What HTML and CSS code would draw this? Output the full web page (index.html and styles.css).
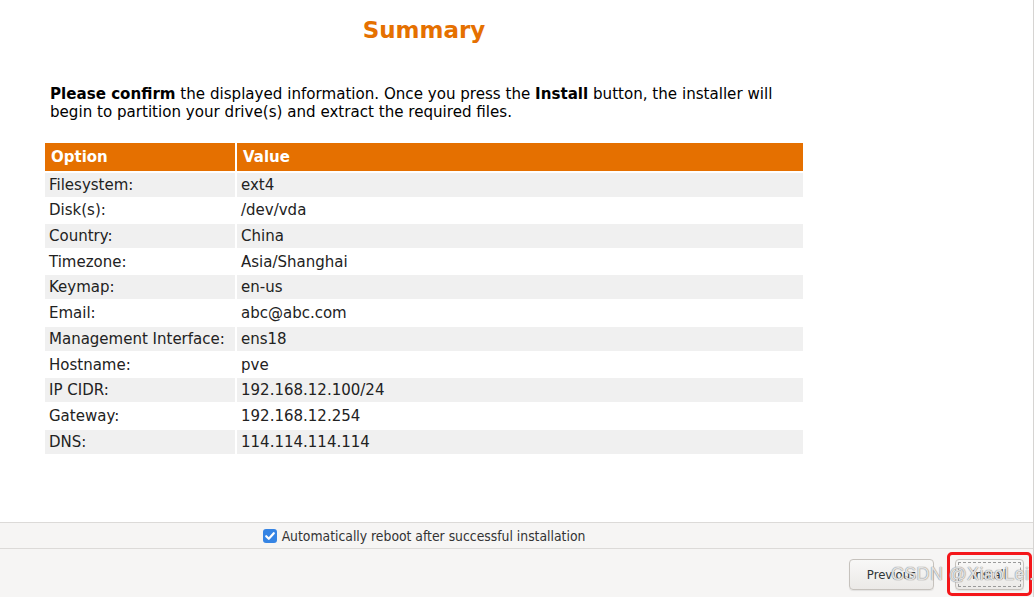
FILE: index.html
```html
<!DOCTYPE html>
<html lang="en">
<head>
    <meta charset="UTF-8">
    <title>Summary</title>
    <link rel="stylesheet" href="styles.css">
</head>
<body>
    <div class="window">
        <div class="content">
            <h1 class="title">Summary</h1>
            <p class="intro"><b>Please confirm</b> the displayed information. Once you press the <b>Install</b> button, the installer will begin to partition your drive(s) and extract the required files.</p>

            <div class="summary">
                <div class="head">Option</div>
                <div class="head">Value</div>

                <div class="cell odd">Filesystem:</div><div class="cell odd">ext4</div>
                <div class="cell">Disk(s):</div><div class="cell">/dev/vda</div>
                <div class="cell odd">Country:</div><div class="cell odd">China</div>
                <div class="cell">Timezone:</div><div class="cell">Asia/Shanghai</div>
                <div class="cell odd">Keymap:</div><div class="cell odd">en-us</div>
                <div class="cell">Email:</div><div class="cell">abc@abc.com</div>
                <div class="cell odd">Management Interface:</div><div class="cell odd">ens18</div>
                <div class="cell">Hostname:</div><div class="cell">pve</div>
                <div class="cell odd">IP CIDR:</div><div class="cell odd">192.168.12.100/24</div>
                <div class="cell">Gateway:</div><div class="cell">192.168.12.254</div>
                <div class="cell odd">DNS:</div><div class="cell odd">114.114.114.114</div>
            </div>
        </div>

        <div class="reboot-bar">
            <label class="reboot">
                <span class="check">
                    <svg width="14" height="14" viewBox="0 0 14 14"><path d="M3.2 7.2 L5.8 9.8 L10.8 4.2" fill="none" stroke="#fff" stroke-width="2.2" stroke-linecap="round" stroke-linejoin="round"/></svg>
                </span>
                Automatically reboot after successful installation
            </label>
        </div>

        <div class="button-bar">
            <button class="btn btn-prev">Previous</button>
            <button class="btn btn-focus">Install
                <span class="highlight"></span>
            </button>
            <span class="watermark">CSDN @XiaoLei.</span>
        </div>
    </div>
</body>
</html>
```

FILE: styles.css
```css
body {
    margin: 0;
    background-color: #fff;
    font-family: "DejaVu Sans", Verdana, sans-serif;
    color: #1a1a1a;
}

.window {
    width: 1033px;
    height: 597px;
    border-right: 1px solid #d6d4d2;
    display: flex;
    flex-direction: column;
    overflow: hidden;
}

.content {
    flex: 1;
    width: 848px;
    padding: 0 45px;
    box-sizing: border-box;
}

.title {
    margin: 0;
    padding-top: 16px;
    line-height: 28px;
    font-size: 23px;
    font-weight: bold;
    text-align: center;
    color: #e57000;
}

.intro {
    margin: 41px 0 0 0;
    padding: 0 5px;
    font-size: 15.1px;
    line-height: 18px;
    color: #000;
}

.summary {
    display: grid;
    grid-template-columns: 190px 1fr;
    grid-template-rows: 28px;
    grid-auto-rows: 24px;
    column-gap: 2px;
    row-gap: 1.7px;
    margin-top: 22px;
}

.head {
    line-height: 28px;
    padding: 0 6px;
    background-color: #e57000;
    color: #fff;
    font-weight: bold;
    font-size: 15px;
}

.cell {
    line-height: 24px;
    padding: 0 4px;
    font-size: 15px;
    color: #222;
}

.cell.odd {
    background-color: #f0f0f0;
}

.reboot-bar {
    box-sizing: border-box;
    height: 27px;
    flex-shrink: 0;
    border-top: 1px solid #dcdad8;
    border-bottom: 1px solid #dcdad8;
    background-color: #f6f5f4;
    display: flex;
    justify-content: center;
    padding-right: 185px;
}

.reboot {
    display: flex;
    align-items: center;
    gap: 5px;
    font-family: "DejaVu Sans Condensed", "DejaVu Sans", sans-serif;
    font-size: 13.8px;
    color: #333;
}

.check {
    width: 14px;
    height: 14px;
    border-radius: 3px;
    background-color: #3584e4;
    display: flex;
}

.button-bar {
    box-sizing: border-box;
    height: 48px;
    flex-shrink: 0;
    background-color: #f6f5f4;
    display: flex;
    justify-content: flex-end;
    align-items: flex-start;
    gap: 21px;
    padding: 10px 9px 0 0;
    position: relative;
}

.btn {
    position: relative;
    height: 31px;
    padding: 0;
    font-family: "DejaVu Sans Condensed", "DejaVu Sans", sans-serif;
    font-size: 13px;
    color: #2e3436;
    background: linear-gradient(#f8f8f7, #ebe9e7);
    border: 1px solid #c6c2bd;
    border-radius: 4px;
    box-shadow: 0 1px 1px rgba(0, 0, 0, 0.08);
}

.btn-prev {
    width: 85px;
}

.btn-focus {
    width: 69px;
    outline: 1px dashed #9a9a9a;
    outline-offset: -4px;
}

.highlight {
    position: absolute;
    left: -9px;
    top: -8px;
    width: 79px;
    height: 38px;
    border: 3px solid #f4161a;
    border-radius: 5px;
}

.watermark {
    position: absolute;
    left: 891px;
    top: 15px;
    white-space: nowrap;
    font-family: "Liberation Sans", Arial, sans-serif;
    font-size: 18px;
    letter-spacing: 0.3px;
    color: rgba(255, 255, 255, 0.75);
    text-shadow: 0 0 1px #8a8a8a, 0 0 1px #8a8a8a;
}
```
